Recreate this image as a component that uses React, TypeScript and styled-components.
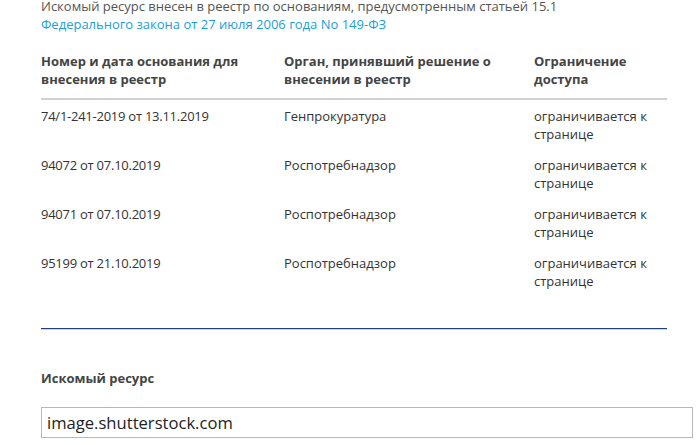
import React from "react";
import styled, { createGlobalStyle } from "styled-components";

const Global = createGlobalStyle`
  html, body { margin: 0; padding: 0; background: #fff; }
  body { font-family: "Open Sans", "Noto Sans", sans-serif; color: #333; overflow: hidden; }
`;

const Page = styled.div`
  padding: 0 7px 0 41px;
  width: 700px;
  box-sizing: border-box;
`;

const Intro = styled.p`
  margin: -3px 0 0;
  font-size: 13px;
  line-height: 18px;
  color: #555;
`;

const Law = styled.span`
  color: #1a9ee0;
`;

const Table = styled.div`
  margin-top: 19px;
  width: 626px;
`;

const Row = styled.div<{ $head?: boolean }>`
  display: grid;
  grid-template-columns: 243px 250px 133px;
  font-size: 13px;
  line-height: 18px;
  font-weight: ${(p) => (p.$head ? 700 : 400)};
  color: ${(p) => (p.$head ? "#444" : "#333")};
  padding: ${(p) => (p.$head ? "0 0 10px" : "7px 0 6px")};
  border-bottom: ${(p) => (p.$head ? "2px solid #d0d0d0" : "none")};
`;

const Cell = styled.div<{ $tight?: boolean }>`
  padding-right: 8px;
  letter-spacing: ${(p) => (p.$tight ? "-0.25px" : "normal")};
`;

const Divider = styled.hr`
  margin: 32px 0 0;
  width: 626px;
  border: none;
  border-top: 1px solid #1f3f7f;
  border-bottom: 1px solid #c9d3e4;
  height: 0;
`;

const Label = styled.div`
  margin-top: 39px;
  font-size: 13px;
  line-height: 18px;
  font-weight: 700;
  color: #444;
`;

const Input = styled.div`
  margin-top: 20px;
  height: 31px;
  box-sizing: border-box;
  border: 1px solid #b8b8b8;
  padding: 0 5px;
  font-size: 16.6px;
  line-height: 29px;
  color: #222;
`;

const rows = [
  ["74/1-241-2019 от 13.11.2019", "Генпрокуратура"],
  ["94072 от 07.10.2019", "Роспотребнадзор"],
  ["94071 от 07.10.2019", "Роспотребнадзор"],
  ["95199 от 21.10.2019", "Роспотребнадзор"],
];

export default function App() {
  return (
    <Page>
      <Global />
      <Intro>
        Искомый ресурс внесен в реестр по основаниям, предусмотренным статьей 15.1
        <br />
        <Law>Федерального закона от 27 июля 2006 года No 149-ФЗ</Law>
      </Intro>
      <Table>
        <Row $head>
          <Cell>Номер и дата основания для внесения в реестр</Cell>
          <Cell>Орган, принявший решение о внесении в реестр</Cell>
          <Cell>Ограничение доступа</Cell>
        </Row>
        {rows.map(([num, org]) => (
          <Row key={num}>
            <Cell $tight>{num}</Cell>
            <Cell>{org}</Cell>
            <Cell>ограничивается к странице</Cell>
          </Row>
        ))}
      </Table>
      <Divider />
      <Label>Искомый ресурс</Label>
      <Input>image.shutterstock.com</Input>
    </Page>
  );
}
